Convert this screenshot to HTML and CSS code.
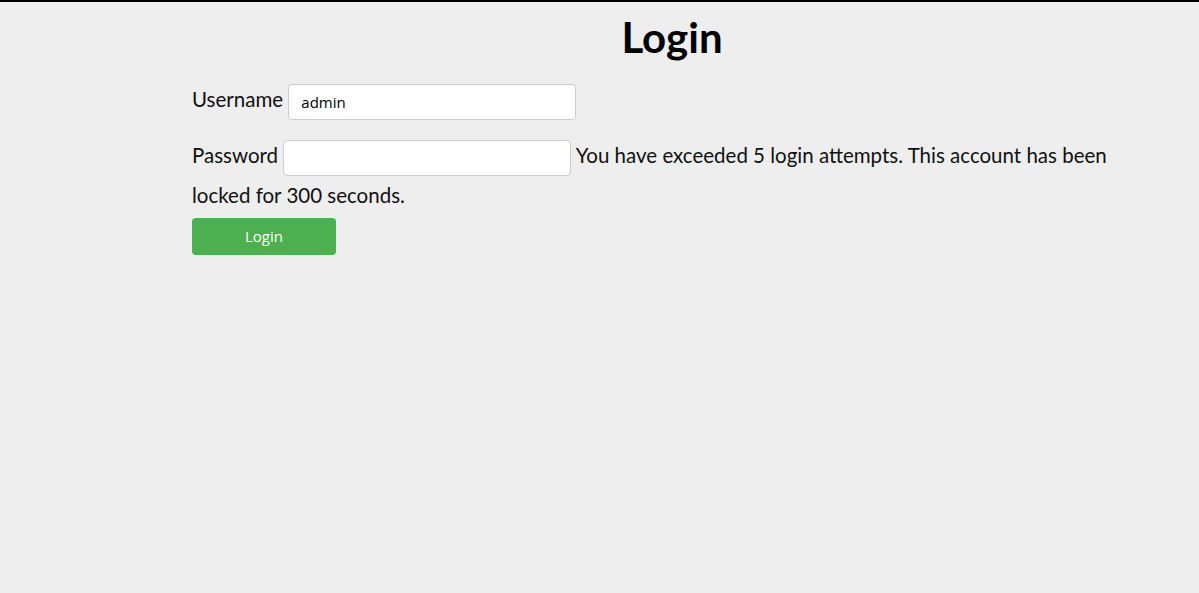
FILE: index.html
```html
<!DOCTYPE html>
<html>
<head>
<meta charset="utf-8">
<link rel="stylesheet" href="styles.css">
</head>
<body>
<div class="page">
  <h1 class="title">Login</h1>
  <form class="form">
    <div class="row row-user">
      <label class="label">Username</label>
      <input class="field" type="text" value="admin">
    </div>
    <div class="row row-pass">
      <label class="label">Password</label>
      <input class="field" type="password">
      <span class="error">You have exceeded 5 login attempts. This account has been locked for 300 seconds.</span>
    </div>
    <button class="btn" type="button">Login</button>
  </form>
</div>
</body>
</html>
```

FILE: styles.css
```css
html, body {
  margin: 0;
  padding: 0;
  background: #eeeeee;
}
body {
  border-top: 2px solid #000;
  height: 591px;
  font-family: "Lato", "Noto Sans", sans-serif;
  color: #111;
}
.page {
  width: 960px;
  margin-left: 192px;
}
.title {
  margin: 10px 0 0;
  text-align: center;
  font-size: 42px;
  line-height: 50px;
  font-weight: 700;
  color: #000;
}
.form {
  margin-top: 18px;
}
.row {
  font-size: 20.5px;
  line-height: 39px;
}
.row-user {
  margin-bottom: 16px;
}
.label {
  color: #111;
}
.field {
  box-sizing: border-box;
  width: 288px;
  height: 36px;
  border: 1px solid #cccccc;
  border-radius: 4px;
  background: #fff;
  padding: 0 12px;
  font-family: "Open Sans", sans-serif;
  font-size: 15px;
  color: #000;
  vertical-align: middle;
  outline: none;
}
.error {
  color: #111;
}
.btn {
  display: block;
  margin-top: 3px;
  width: 144px;
  height: 37px;
  border: none;
  border-radius: 4px;
  background: #4caf50;
  color: #fff;
  font-family: "Open Sans", sans-serif;
  font-size: 15px;
  padding: 0;
}
```
